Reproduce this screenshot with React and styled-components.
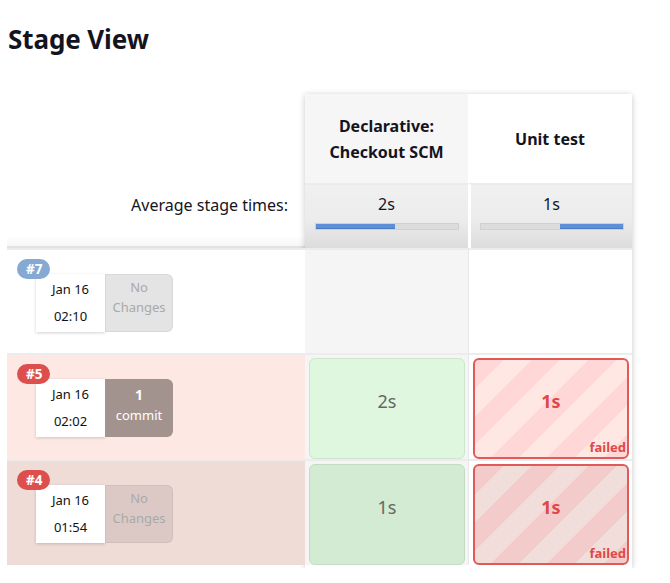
import React from 'react';
import styled, { createGlobalStyle, css } from 'styled-components';

const GlobalStyle = createGlobalStyle`
  body {
    margin: 0;
    background: #fff;
    font-family: "Noto Sans", "DejaVu Sans", sans-serif;
    color: #14141f;
  }
`;

const Page = styled.div`
  padding: 20px 0 0 7px;
`;

const Title = styled.h1`
  margin: 0 0 36px 1px;
  font-size: 26px;
  font-weight: 700;
  letter-spacing: -0.1px;
  line-height: 38px;
`;

const Table = styled.div`
  display: grid;
  grid-template-columns: 298px 327px;
  width: 630px;
`;

const rows = css`
  grid-template-rows: 89px 65px 105px 106px 106px;
`;

const LeftCol = styled.div`
  display: grid;
  ${rows}
`;

const StageArea = styled.div`
  display: grid;
  grid-template-columns: 163px 164px;
  ${rows}
  box-shadow: 0 1px 6px rgba(0, 0, 0, 0.22);
  background: #fff;
  align-self: start;
  padding-bottom: 3px;
`;

const AvgLabel = styled.div`
  display: flex;
  justify-content: flex-end;
  padding: 11px 17px 0 0;
  font-size: 16px;
  border-bottom: 2px solid #e2e2e2;
  box-shadow: inset 0 -14px 10px -10px rgba(0, 0, 0, 0.04);
`;

const rowBg = {
  blue: '#ffffff',
  red: '#fee8e4',
  dark: '#efdcd7',
};

const BuildRow = styled.div`
  background: ${(p) => rowBg[p.$tone]};
  position: relative;
  padding: 24px 0 0 29px;
  border-top: 2px solid #ececec;
`;

const Badge = styled.span`
  position: absolute;
  left: 10px;
  top: 9px;
  height: 20px;
  padding: 0 8px 0 9px;
  border-radius: 10px;
  background: ${(p) => (p.$tone === 'blue' ? '#85a9d2' : '#dd4f4c')};
  color: #fff;
  font-size: 13.5px;
  font-weight: 700;
  line-height: 20px;
  z-index: 1;
`;

const Card = styled.div`
  display: flex;
  width: 137px;
  height: 58px;
`;

const DateBox = styled.div`
  width: 69px;
  background: #fff;
  box-shadow: 0 1px 3px rgba(0, 0, 0, 0.18);
  display: flex;
  flex-direction: column;
  align-items: center;
  justify-content: center;
  gap: 12px;
  font-size: 13px;
  line-height: 15px;
  color: #111;
`;

const Changes = styled.div`
  flex: 1;
  border-radius: 0 6px 6px 0;
  display: flex;
  flex-direction: column;
  align-items: center;
  justify-content: center;
  font-size: 13px;
  line-height: 20px;
  ${(p) =>
    p.$commit
      ? css`
          background: #a2938f;
          color: #fff;
          padding-bottom: 6px;
          b {
            font-size: 14px;
          }
        `
      : css`
          background: ${p.$tint};
          color: #a9a9a9;
          border: 1px solid rgba(0, 0, 0, 0.05);
          padding-bottom: 12px;
        `}
`;

const HeadCell = styled.div`
  background: ${(p) => (p.$alt ? '#f6f6f6' : '#fff')};
  display: flex;
  align-items: center;
  justify-content: center;
  text-align: center;
  font-size: 16px;
  font-weight: 700;
  line-height: 26px;
  padding: 0 10px;
`;

const AvgCell = styled.div`
  background: linear-gradient(#f0f0f0 0%, #ececec 55%, #dcdcdc 100%);
  border-left: ${(p) => (p.$alt ? 'none' : '3px solid #fff')};
  border-top: 2px solid #ececec;
  display: flex;
  flex-direction: column;
  align-items: center;
  padding-top: 8px;
  font-size: 16px;
`;

const Bar = styled.div`
  margin-top: 8px;
  width: 142px;
  height: 5px;
  background: #dcdcdc;
  border: 1px solid #d0d0d0;
  position: relative;
  overflow: hidden;
`;

const Fill = styled.div`
  position: absolute;
  top: 0;
  bottom: 0;
  background: #5c8fd6;
  border-bottom: 1px solid #4a7bc4;
`;

const StageCell = styled.div`
  background: ${(p) => (p.$alt ? '#f5f5f5' : '#fff')};
  border-left: ${(p) => (p.$alt ? 'none' : '1px solid #e8e8e8')};
  border-top: 2px solid #ececec;
  padding: ${(p) => (p.$box ? '3px 3px 0 4px' : '0')};
  display: flex;
`;

const SuccessBox = styled.div`
  flex: 1;
  border-radius: 6px;
  border: 1px solid ${(p) => (p.$dark ? '#c3dcc3' : '#cde6cd')};
  background: ${(p) => (p.$dark ? '#d2ebd2' : '#def7de')};
  display: flex;
  align-items: center;
  justify-content: center;
  font-size: 18px;
  color: #666;
  padding-bottom: 16px;
`;

const FailBox = styled.div`
  flex: 1;
  position: relative;
  border-radius: 6px;
  border: 2px solid #e05a5a;
  background: repeating-linear-gradient(
    135deg,
    ${(p) => (p.$dark ? '#f4cbcb' : '#ffd7d7')} 0 20px,
    ${(p) => (p.$dark ? '#f1ddd9' : '#ffe8e4')} 20px 40px
  );
  display: flex;
  align-items: center;
  justify-content: center;
  font-size: 18px;
  font-weight: 700;
  color: #e04848;
  padding-bottom: 16px;
`;

const FailedTag = styled.span`
  position: absolute;
  right: 1px;
  bottom: 3px;
  font-size: 13px;
  font-weight: 700;
  line-height: 14px;
`;

const builds = [
  { id: 7, tone: 'blue', date: 'Jan 16', time: '02:10', changes: null, tint: '#e4e4e4' },
  { id: 5, tone: 'red', date: 'Jan 16', time: '02:02', changes: 1, tint: '' },
  { id: 4, tone: 'dark', date: 'Jan 16', time: '01:54', changes: null, tint: '#dcc9c5' },
];

const stageRuns = {
  7: null,
  5: { checkout: '2s', unit: '1s', dark: false },
  4: { checkout: '1s', unit: '1s', dark: true },
};

const App = () => (
  <Page>
    <GlobalStyle />
    <Title>Stage View</Title>
    <Table>
      <LeftCol>
        <div />
        <AvgLabel>Average stage times:</AvgLabel>
        {builds.map((b) => (
          <BuildRow key={b.id} $tone={b.tone}>
            <Badge $tone={b.tone === 'blue' ? 'blue' : 'red'}>#{b.id}</Badge>
            <Card>
              <DateBox>
                <span>{b.date}</span>
                <span>{b.time}</span>
              </DateBox>
              {b.changes ? (
                <Changes $commit>
                  <b>{b.changes}</b>
                  <span>commit</span>
                </Changes>
              ) : (
                <Changes $tint={b.tint}>
                  <span>No</span>
                  <span>Changes</span>
                </Changes>
              )}
            </Card>
          </BuildRow>
        ))}
      </LeftCol>
      <StageArea>
        <HeadCell $alt>
          Declarative:
          <br />
          Checkout SCM
        </HeadCell>
        <HeadCell>Unit test</HeadCell>
        <AvgCell $alt>
          2s
          <Bar>
            <Fill style={{ left: 0, width: '56%' }} />
          </Bar>
        </AvgCell>
        <AvgCell>
          1s
          <Bar>
            <Fill style={{ right: 0, width: '44%' }} />
          </Bar>
        </AvgCell>
        {builds.map((b) => {
          const run = stageRuns[b.id];
          if (!run) {
            return (
              <React.Fragment key={b.id}>
                <StageCell $alt />
                <StageCell />
              </React.Fragment>
            );
          }
          return (
            <React.Fragment key={b.id}>
              <StageCell $alt $box>
                <SuccessBox $dark={run.dark}>{run.checkout}</SuccessBox>
              </StageCell>
              <StageCell $box>
                <FailBox $dark={run.dark}>
                  {run.unit}
                  <FailedTag>failed</FailedTag>
                </FailBox>
              </StageCell>
            </React.Fragment>
          );
        })}
      </StageArea>
    </Table>
  </Page>
);

export default App;
